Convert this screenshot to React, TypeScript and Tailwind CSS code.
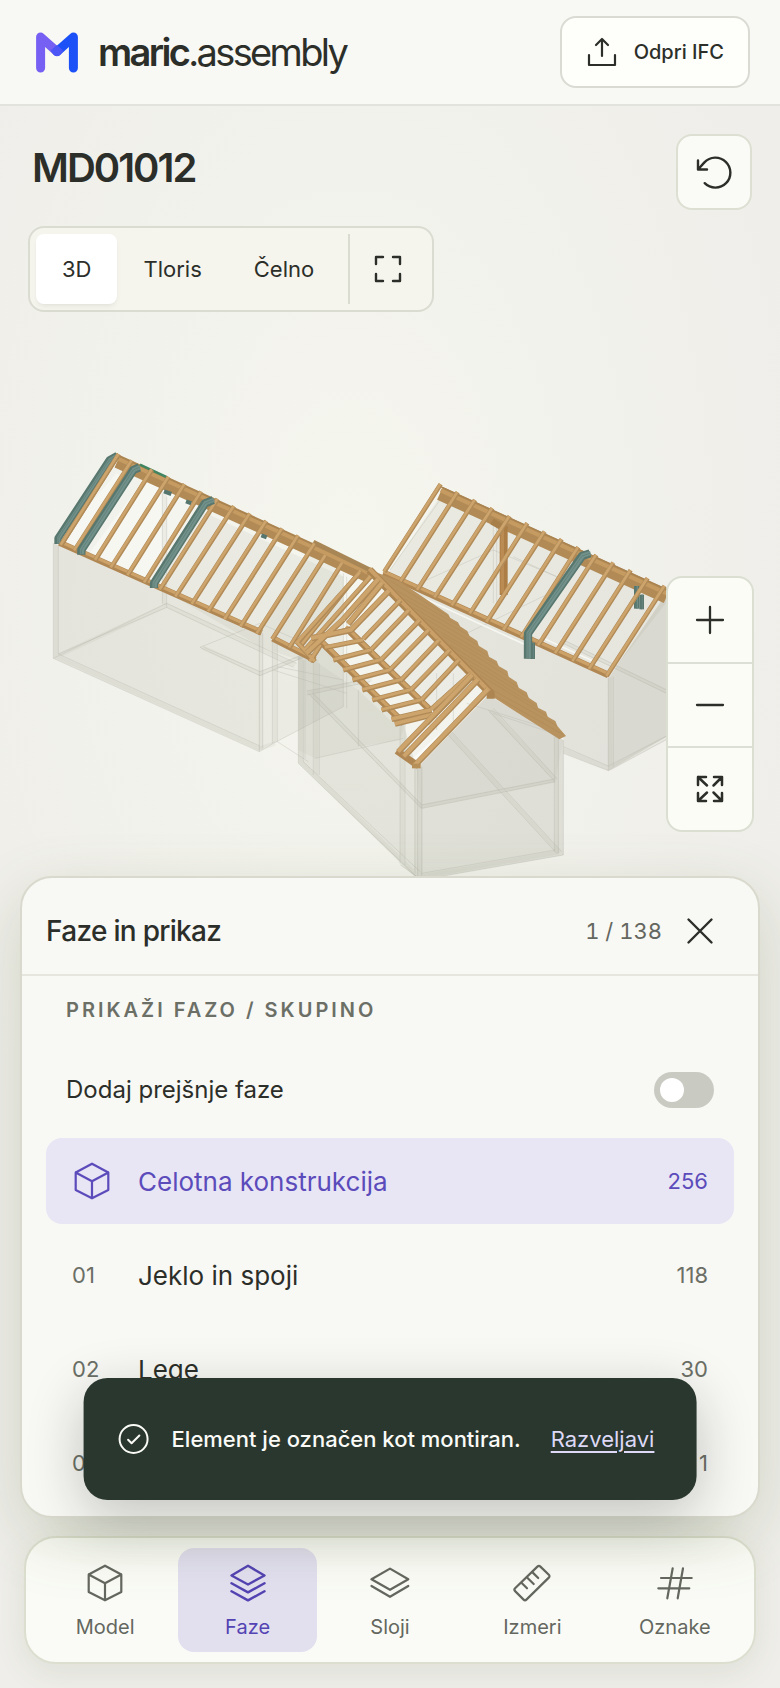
import React from 'react';

type IconProps = { children: React.ReactNode; className?: string; box?: number; stroke?: number };

const Icon = ({ children, className = 'w-10 h-10', box = 40, stroke = 2.2 }: IconProps) => (
  <svg
    viewBox={`0 0 ${box} ${box}`}
    className={className}
    fill="none"
    stroke="currentColor"
    strokeWidth={stroke}
    strokeLinecap="round"
    strokeLinejoin="round"
    aria-hidden="true"
  >
    {children}
  </svg>
);

const CubeIcon = () => (
  <Icon>
    <path d="M20 2.7 36.3 11.5V29L20 37.3 3.7 29V11.5ZM3.7 11.5 20 20.3 36.3 11.5M20 20.3V37.3" />
  </Icon>
);

const StackIcon = () => (
  <Icon stroke={2.4}>
    <path d="M20 2.8 36.5 12.5 20 21.5 3.5 12.5ZM3.5 20.3 20 29.4 36.5 20.3M3.5 28.3 20 37.4 36.5 28.3" />
  </Icon>
);

const LayersIcon = () => (
  <Icon>
    <path d="M20 5.6 38.3 16.3 20 26.8 1.5 16.3ZM1.5 23 20 33.8 38.3 23" />
  </Icon>
);

const RulerIcon = () => (
  <Icon>
    <path d="M25.4 3.6 3.1 25.3Q1.7 26.7 3.1 28.1L11.6 36.6Q13 38 14.4 36.6L36.8 14.6Q38.2 13.2 36.8 11.8L28.4 3.6Q26.9 2.2 25.4 3.6Z" />
    <path d="M9.7 20 15 25.3M15.3 14.7 21.7 21M20.8 9.6 26.2 15" />
  </Icon>
);

const HashIcon = () => (
  <Icon>
    <path d="M17.7 5.3 12.3 35.3M28 5.3 22.7 35.3M6 15H36.7M3.3 25.3H34.3" />
  </Icon>
);

const Logo = () => (
  <svg viewBox="0 0 42 41" className="h-[41px] w-[42px]" fill="none" strokeWidth="9" strokeLinecap="round" strokeLinejoin="round" aria-hidden="true">
    <path d="M4.6 36V5L21 19.6" stroke="#7660f3" />
    <path d="M37.4 36V5L21 19.6" stroke="#1c51f8" />
    <path d="m21 13 6.4 5.8-3.6 4.4q-2.8 2-5.6 0l-3.6-4.4Z" fill="#4c55f6" />
  </svg>
);

type Beam = [number, number, number, number];

const leftRafters: Beam[] = [
  [266, 73, 93, 345], [306, 92, 133, 362], [366, 119, 196, 390], [416, 141, 243, 413],
  [464, 163, 293, 436], [514, 185, 343, 458], [563, 207, 390, 479], [612, 229, 437, 500],
  [660, 251, 486, 522], [709, 273, 535, 545], [757, 296, 584, 568], [805, 317, 632, 590],
  [854, 341, 681, 611], [887, 376, 727, 628], [937, 399, 778, 653], [992, 422, 812, 648],
];

const rightRafters: Beam[] = [
  [482, 73, 313, 335], [533, 97, 362, 365], [585, 120, 412, 390], [637, 145, 464, 413],
  [689, 169, 516, 437], [742, 190, 570, 461], [794, 215, 620, 486], [845, 238, 671, 510],
  [895, 262, 724, 532], [949, 285, 775, 556], [1000, 308, 826, 580], [1052, 331, 878, 604],
  [1103, 355, 928, 627], [1154, 378, 980, 648],
];

const slopeRafters: Beam[] = [
  [362, 420, 250, 537], [388, 450, 275, 568], [420, 480, 303, 600], [447, 510, 330, 630],
  [478, 540, 362, 662], [510, 570, 393, 690], [537, 600, 425, 720],
  [250, 540, 135, 563], [275, 570, 160, 600], [303, 600, 190, 630], [332, 630, 218, 660],
  [362, 660, 247, 690], [393, 690, 277, 720], [425, 720, 305, 750],
];

const Timber = ({ beams, width = 14 }: { beams: Beam[]; width?: number }) => {
  const d = beams.map(([a, b, c, e]) => `M${a} ${b}L${c} ${e}`).join('');
  return (
    <>
      <path d={d} stroke="#b08a57" strokeWidth={width} />
      <path d={d} stroke="#cda46c" strokeWidth={width - 6} transform="translate(-1 -1)" />
    </>
  );
};

const Steel = ({ d, width = 22 }: { d: string; width?: number }) => (
  <>
    <path d={d} stroke="#58776f" strokeWidth={width} />
    <path d={d} stroke="#71918a" strokeWidth={width - 12} transform="translate(2 -1)" />
    <path d={d} stroke="#5a7a72" strokeWidth="2" />
  </>
);

const RoofModel = () => (
  <svg viewBox="-840 -444 2340 1692" className="block w-full" fill="none" strokeLinejoin="round" role="img" aria-label="3D model MD01012">
    {/* transparent walls */}
    <g fill="#7c7c68">
      <path d="M-680 250-60 520V875L-680 595Z" fillOpacity="0.11" />
      <path d="M-350 100-50 240 190 350V480L55 600-60 560-350 390Z" fillOpacity="0.08" />
      <path d="M-60 520 100 250 190 350V740L-20 850-60 870Z" fillOpacity="0.07" />
      <path d="M480 110 1165 420 985 650 320 345Z" fillOpacity="0.09" />
      <path d="M320 345 985 650V932L850 880V828L640 600Z" fillOpacity="0.12" />
      <path d="M985 655 1160 400V830L985 932Z" fillOpacity="0.2" />
      <path d="M55 590 120 550 370 790 410 925V1256L55 910Z" fillOpacity="0.13" />
      <path d="M235 690 330 780 375 795 360 840 235 860Z" fillOpacity="0.08" />
      <path d="M55 590 100 600 235 690V865L105 895 55 870Z" fillOpacity="0.05" />
      <path d="M410 925 625 705 850 840V1185L420 1260 410 1256Z" fillOpacity="0.16" />
      <path d="M420 1045 825 965 850 840 625 705 410 925Z" fillOpacity="0.05" />
      <path d="M330 400 600 670 455 755 200 505Z" fillOpacity="0.06" />
    </g>
    <path d="M-490 40-665 240-620 265-450 60ZM-410 60-580 290-400 365-210 110Z" fill="#f8f8f4" fillOpacity="0.8" />
    <path d="M482 818 400 893 418 902 482 840Z" fill="#fafaf7" />
    <g stroke="#a9aa9f" strokeOpacity="0.12" strokeWidth="13">
      <path d="M-672 250V590L-340 436 45 616M-672 588-61 866-15 850" />
      <path d="M-347 100V436M-57 520V870M-16 545V848M62 595V905L408 1244M109 600V945M367 790V1212L420 1252M409 925V1245M422 920V1250M830 830V1178L422 1250" />
      <path d="M-234 562-60 641 110 571M82 699 275 658M90 697 425 1040 825 961M632 752 828 960M507 818 838 1178M990 652V925L1160 833M985 925 850 870M850 545 1160 695" />
    </g>
    <g stroke="#b3b4aa" strokeOpacity="0.5" strokeWidth="2">
      <path d="M-680 250V595L-340 430 50 610M-665 258V582M-665 582-340 442 40 622M-680 595-62 875-20 850M-665 582-60 858" />
      <path d="M-353 100V430M-340 110V442M-62 520V875M-52 520V865M-23 540V850M-8 550V845M-240 562-60 490 120 570-60 647ZM-228 562-60 635 100 572" />
      <path d="M55 590V910L410 1250M70 600V905L420 1235M75 600V895M100 610V945M118 610V945M190 340V740M200 350V745M235 690V860" />
      <path d="M-20 630 200 700M-8 620 190 660M-20 850 190 740M80 693 200 670 280 650M80 705 270 665" />
      <path d="M85 700 425 1045 825 965M95 695 425 1035 825 957M105 895 370 835M-8 845 85 905M360 790V1210M375 790V1215M362 1215 420 1256" />
      <path d="M405 925V1240M413 925V1250M425 920V1250M823 830V1175M835 835V1180M850 840V1185L420 1260M825 1170 425 1240" />
      <path d="M625 750 825 965M640 745 830 955M500 820 830 1180M515 815 845 1175" />
      <path d="M985 655V932L1160 838M1000 650V920M985 918 1160 828M985 918 850 860M985 932 850 880M850 550 1160 700M850 540 1160 690" />
      <path d="M640 180V430M650 190V440M440 360 640 270 830 350M560 520 850 380M480 120 330 330M700 290 830 350M470 640V810M520 640V790" />
      <path d="M640 760 850 830M560 730 850 820" />
    </g>

    {/* left wing */}
    <g transform="translate(-750 -90)">
      <path d="M262 94 860 366 1015 438" stroke="#b18a55" strokeWidth="40" />
      <path d="M264 86 860 357 1015 429" stroke="#c59b62" strokeWidth="12" />
      <path d="M262 76 860 348" stroke="#a98350" strokeWidth="4" />
      <path d="M850 336 1030 425" stroke="#a88655" strokeWidth="14" />
      <path d="M88 338 695 608M728 625 855 690" stroke="#b08753" strokeWidth="19" />
      <path d="M88 334 695 604M728 621 855 686" stroke="#cda269" strokeWidth="9" />
      <path d="M330 104 412 142" stroke="#3f8561" strokeWidth="7" />
      <path d="M402 184 424 192M468 214 484 220M694 316 710 322" stroke="#55766e" strokeWidth="12" />
      <Timber beams={leftRafters} />
      <Steel d="M262 76 238 90 84 325V342" width={22} />
      <Steel d="M328 112 310 120 154 360V374" width={25} />
      <Steel d="M550 210 525 220 372 460V474" width={25} />
      <Timber beams={[[266, 73, 93, 345]]} />
    </g>

    {/* right wing */}
    <path d="M480 100 1160 410" stroke="#b18a55" strokeWidth="42" />
    <path d="M482 91 1160 400" stroke="#c59b62" strokeWidth="12" />
    <path d="M480 79 1160 388" stroke="#a98350" strokeWidth="4" />
    <path d="M636 184 680 210" stroke="#a87f49" strokeWidth="20" />
    <path d="M671 200V405" stroke="#ac7d45" strokeWidth="24" />
    <path d="M667 205V400" stroke="#ba8b52" strokeWidth="10" />
    <path d="M310 338 985 645" stroke="#b08753" strokeWidth="20" />
    <path d="M310 334 985 641" stroke="#cda269" strokeWidth="9" />
    <path d="M345 375 740 556M780 530 950 608" stroke="#f7f7f2" strokeWidth="5" />
    <Steel d="M1070 378V446" width={16} />
    <Steel d="M1085 404V448" width={14} />
    <Timber beams={rightRafters} />
    <Steel d="M758 548V597" width={14} />
    <Steel d="M930 280 906 288 744 520V596" width={25} />

    {/* middle wing */}
    <path
      d="M285 335 360 365 420 405 505 463 510 473 534 487 540 499 562 513 568 527 592 543 596 557 622 573 627 590 650 603 656 618 682 633 686 650 710 666 716 683 740 697 746 713 770 729 774 743 798 755 803 770 826 783 832 798 858 828 838 838 640 712 600 660Z"
      fill="#b8935f"
    />
    <g stroke="#a8834f" strokeWidth="2" strokeOpacity="0.5">
      <path d="M330 362 510 473M350 392 540 499M375 418 568 527M400 443 596 557M430 472 627 590M455 500 656 618M485 525 686 650M510 555 716 683M540 585 746 713M570 615 774 743M600 645 803 770M620 680 832 798M635 702 850 824" />
    </g>
    <path d="M268 330 632 700V716" stroke="#ad8551" strokeWidth="24" />
    <path d="M268 326 628 694" stroke="#caa068" strokeWidth="12" />
    <path d="M200 505 448 748M118 540 372 790" stroke="#ae8550" strokeWidth="20" />
    <path d="M198 500 446 743M118 535 370 785" stroke="#cda269" strokeWidth="10" />
    <Timber
      beams={[
        [240, 338, 50, 550], [272, 350, 75, 570], [50, 545, 105, 605], [122, 555, 90, 605],
        [210, 508, 95, 532],
      ]}
      width={15}
    />
    <Timber beams={[[296, 358, 190, 478], [308, 368, 205, 492], [328, 392, 212, 512], [190, 478, 80, 580], [215, 510, 95, 535]]} width={18} />
    <Timber beams={slopeRafters} width={15} />
    <Timber beams={[[575, 640, 455, 748], [455, 750, 335, 778], [455, 765, 345, 792]]} width={17} />
    <path d="M350 872 415 918" stroke="#b08753" strokeWidth="20" />
    <Timber beams={[[572, 655, 440, 790]]} width={16} />
    <Timber beams={[[578, 645, 355, 876], [595, 658, 372, 890], [625, 688, 403, 918]]} width={18} />
    <path d="M396 918H422" stroke="#b78f58" strokeWidth="14" />
  </svg>
);

const phases = [
  { id: '01', name: 'Jeklo in spoji', count: 118 },
  { id: '02', name: 'Lege', count: 30 },
  { id: '03', name: 'Špirovci', count: 1 },
];

const tabs = [
  { label: 'Model', icon: <CubeIcon /> },
  { label: 'Faze', icon: <StackIcon />, active: true },
  { label: 'Sloji', icon: <LayersIcon /> },
  { label: 'Izmeri', icon: <RulerIcon /> },
  { label: 'Oznake', icon: <HashIcon /> },
];

const Header = () => (
  <header className="flex items-center justify-between border-b-2 border-[#e2e3dc] bg-[#f8f8f4] pt-4 pr-[30px] pb-4 pl-9">
    <a href="#" className="flex items-center gap-5 text-[38px] leading-10 tracking-[-0.07em]">
      <Logo />
      <span>
        <strong className="font-semibold">maric</strong>.assembly
      </span>
    </a>
    <button className="flex h-[72px] items-center gap-4 rounded-2xl border-2 border-[#dadbd2] bg-[#fefefb] px-6 text-xl font-medium">
      <Icon className="h-8 w-8" box={32}>
        <path d="M16 3V20M10 9 16 3 22 9M3 19V29H29V19" />
      </Icon>
      Odpri IFC
    </button>
  </header>
);

const Toolbar = () => (
  <div className="pt-7 pr-7 pl-7">
    <div className="flex items-start justify-between">
      <h1 className="pt-2.5 pl-1 text-[40px] leading-12 font-semibold tracking-tighter">MD01012</h1>
      <button aria-label="Ponastavi pogled" className="flex h-[76px] w-[76px] items-center justify-center rounded-2xl border-2 border-[#dcdfd1] bg-[#fafbf6]">
        <Icon stroke={2.4}>
          <path d="M4 8.5V17.5H13M4 17.5 10.4 10.4A15 15 0 1 1 10.7 31.2" />
        </Icon>
      </button>
    </div>
    <div className="mt-4 inline-flex rounded-2xl border-2 border-[#dadbd1] bg-[#f5f5ee] p-1.5 text-[22px]">
      <button className="h-[70px] rounded-lg bg-white px-[26px] shadow-md shadow-black/5">3D</button>
      <button className="px-[26px]">Tloris</button>
      <button className="px-[26px]">Čelno</button>
      <span className="ml-2 w-0.5 bg-[#dadbd1]" />
      <button aria-label="Okvir" className="flex w-[76px] items-center justify-center">
        <Icon className="h-8 w-8" box={32} stroke={2.4}>
          <path d="M4 11V4H11M21 4H28V11M28 21V28H21M11 28H4V21" />
        </Icon>
      </button>
    </div>
  </div>
);

const ZoomControls = () => (
  <div className="absolute right-[26px] bottom-11 flex w-[88px] flex-col overflow-hidden rounded-2xl border-2 border-[#dadfd2] bg-[#fbfcf6]">
    <button aria-label="Približaj" className="flex h-[84px] items-center justify-center">
      <Icon className="h-8 w-8" box={32} stroke={2.3}>
        <path d="M16 3V29M3 16H29" />
      </Icon>
    </button>
    <button aria-label="Oddalji" className="flex h-[84px] items-center justify-center border-t-2 border-[#dcdfd6]">
      <Icon className="h-8 w-8" box={32} stroke={2.3}>
        <path d="M3 16H29" />
      </Icon>
    </button>
    <button aria-label="Prilagodi pogled" className="flex h-[84px] items-center justify-center border-t-2 border-[#dcdfd6]">
      <Icon className="h-8 w-8" box={32} stroke={2.5}>
        <path d="M12 4H4V12M4 4 13 12.5M20 4H28V12M28 4 19.5 12.5M4 20V28H12M4 28 13 19.5M28 20V28H20M28 28 19.5 19.5" />
      </Icon>
    </button>
  </div>
);

const PhasePanel = () => (
  <section className="overflow-hidden rounded-[32px] border-2 border-[#d9dacd] bg-[#f8f8f4] shadow-[0_20px_64px_rgba(80,100,40,0.2)]">
    <div className="flex h-[98px] items-center border-b-2 border-[#e6e6df] pt-2.5 pr-[38px] pl-6">
      <h2 className="flex-1 text-[28px] leading-9 font-medium tracking-tight">Faze in prikaz</h2>
      <span className="pr-[18px] text-[22px] text-[#64675f] tabular-nums">1 / 138</span>
      <button aria-label="Zapri" className="flex h-10 w-10 items-center justify-center">
        <Icon className="h-8 w-8" box={32} stroke={2.4}>
          <path d="M4.5 4.5 27.5 27.5M27.5 4.5 4.5 27.5" />
        </Icon>
      </button>
    </div>
    <div className="px-6 pb-2.5">
      <h3 className="px-5 pt-5 text-xl leading-7 font-semibold tracking-[0.15em] text-[#6b6f66]">PRIKAŽI FAZO / SKUPINO</h3>
      <label className="mt-[18px] flex h-24 items-center justify-between px-5 text-2xl">
        Dodaj prejšnje faze
        <input
          type="checkbox"
          className="h-9 w-[60px] appearance-none rounded-full bg-[#c9cbc2] p-1.5 before:block before:h-6 before:w-6 before:rounded-full before:bg-white"
        />
      </label>
      <div className="flex flex-col gap-2">
        <button className="flex h-[86px] items-center rounded-2xl bg-[#e8e5f4] pr-[26px] pl-[26px] text-left text-[#5b4bbb]">
          <span className="w-[66px]">
            <CubeIcon />
          </span>
          <span className="flex-1 text-[26px]">Celotna konstrukcija</span>
          <span className="text-[22px]">256</span>
        </button>
        {phases.map((phase) => (
          <button key={phase.id} className="flex h-[86px] items-center pr-[26px] pl-[26px] text-left">
            <span className="w-[66px] text-[22px] text-[#6b6f66]">{phase.id}</span>
            <span className="flex-1 text-[26px]">{phase.name}</span>
            <span className="text-[22px] text-[#6b6f66]">{phase.count}</span>
          </button>
        ))}
      </div>
    </div>
  </section>
);

const Toast = () => (
  <div
    role="status"
    className="absolute bottom-[18px] left-1/2 z-10 flex h-[122px] -translate-x-1/2 items-center rounded-3xl bg-[#29372e] pr-[42px] pl-[34px] text-[22px] font-medium whitespace-nowrap text-[#fafaf7] shadow-[0_16px_56px_rgba(20,24,20,0.24)]"
  >
    <Icon className="mr-[22px] h-8 w-8" box={32} stroke={2}>
      <circle cx="16" cy="16" r="14" />
      <path d="M10.5 16.8 14 20.3 21.8 12.5" />
    </Icon>
    Element je označen kot montiran.
    <button className="ml-[30px] font-normal text-[#ddd9f6] underline underline-offset-4">Razveljavi</button>
  </div>
);

const BottomNav = () => (
  <nav className="mx-6 mt-[18px] mb-6 grid grid-cols-5 gap-1 rounded-[32px] border-2 border-[#dcdfcf] bg-[#fafbf6] p-2.5 shadow-[0_8px_32px_rgba(80,100,40,0.1)]">
    {tabs.map((tab) => (
      <button
        key={tab.label}
        className={
          tab.active
            ? 'flex h-[104px] flex-col items-center gap-2.5 rounded-2xl bg-[#e2dfef] pt-[15px] text-xl text-[#5343b3]'
            : 'flex h-[104px] flex-col items-center gap-2.5 rounded-2xl pt-[15px] text-xl text-[#64675f]'
        }
      >
        {tab.icon}
        {tab.label}
      </button>
    ))}
  </nav>
);

const App = () => {
  return (
    <div className="flex min-h-screen flex-col bg-[#efeeea] font-['Inter',sans-serif] text-[#2c2e29]">
      <Header />
      <main className="flex-1 overflow-hidden bg-[radial-gradient(ellipse_60%_50%_at_45%_28%,#f5f6ee,#efeeea)]">
        <Toolbar />
        <div className="relative">
          <RoofModel />
          <ZoomControls />
        </div>
        <div className="relative mx-5">
          <PhasePanel />
          <Toast />
        </div>
        <BottomNav />
      </main>
    </div>
  );
};

export default App;
